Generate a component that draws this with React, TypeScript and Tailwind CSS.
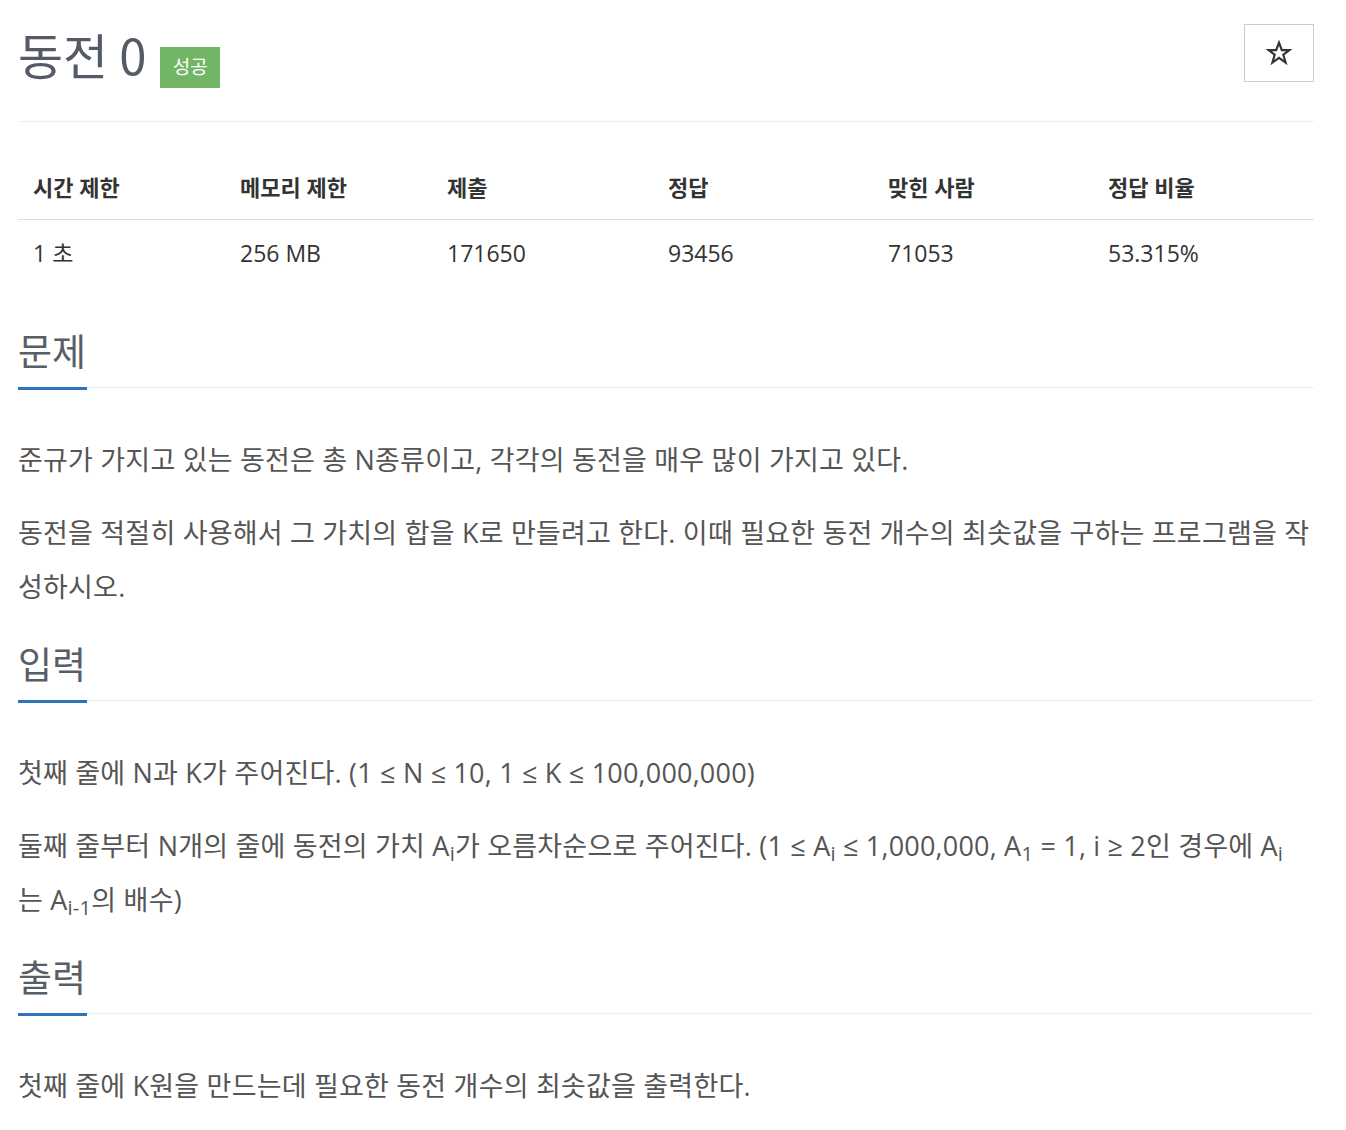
const font = { fontFamily: '"Open Sans", "Noto Sans CJK KR", sans-serif' }

const stats = [
  { label: '시간 제한', value: '1 초', w: 'w-[207px]' },
  { label: '메모리 제한', value: '256 MB', w: 'w-[207px]' },
  { label: '제출', value: '171650', w: 'w-[221px]' },
  { label: '정답', value: '93456', w: 'w-[220px]' },
  { label: '맞힌 사람', value: '71053', w: 'w-[220px]' },
  { label: '정답 비율', value: '53.315%', w: 'flex-1' },
]

const Section: React.FC<{ title: string; children: React.ReactNode }> = ({ title, children }) => (
  <section>
    <h2 className="text-[37px] leading-[54px] text-[#585e68] font-['Noto_Sans_CJK_KR',sans-serif] pb-[10px]">{title}</h2>
    <div className="flex items-start">
      <div className="w-[69px] h-[3px] bg-[#2f73bb]" />
      <div className="flex-1 border-t border-dotted border-[#dcdcdc]" />
    </div>
    <div className="pt-[43px] flex flex-col gap-[19px] text-[27px] leading-[54px] tracking-[0.2px] text-[#555]">
      {children}
    </div>
  </section>
)

export default function App() {
  return (
    <div className="bg-white min-h-screen pl-[18px] pr-[32px] pt-[24px] pb-[20px] text-[#333]" style={font}>
      <div className="flex items-start justify-between pb-[33px] border-b border-[#eeeeee]">
        <div className="flex items-start">
          <h1 className="text-[49px] leading-[60px] text-[#555b65] font-['Noto_Sans_CJK_KR',sans-serif]">동전 0</h1>
          <span className="ml-[14px] mt-[23px] w-[60px] h-[41px] flex items-center justify-center bg-[#72b566] text-white text-[19px]">
            성공
          </span>
        </div>
        <button className="w-[70px] h-[58px] border border-[#cccccc] flex items-center justify-center">
          <svg width="26" height="26" viewBox="0 0 24 24" fill="none" stroke="#333" strokeWidth="2" strokeLinejoin="miter">
            <polygon points="12,2.5 14.6,9.3 21.7,9.3 16,13.6 18.1,20.8 12,16.5 5.9,20.8 8,13.6 2.3,9.3 9.4,9.3" />
          </svg>
        </button>
      </div>

      <div className="mt-[34px]">
        <div className="flex border-b border-[#dddddd] h-[64px] items-center">
          {stats.map((s) => (
            <div key={s.label} className={`${s.w} pl-[15px] text-[22px] font-bold text-[#333]`}>
              {s.label}
            </div>
          ))}
        </div>
        <div className="flex h-[66px] items-center">
          {stats.map((s) => (
            <div key={s.label} className={`${s.w} pl-[15px] text-[23px] text-[#333]`}>
              {s.value}
            </div>
          ))}
        </div>
      </div>

      <div className="mt-[37px] flex flex-col gap-[22px]">
        <Section title="문제">
          <p>준규가 가지고 있는 동전은 총 N종류이고, 각각의 동전을 매우 많이 가지고 있다.</p>
          <p>동전을 적절히 사용해서 그 가치의 합을 K로 만들려고 한다. 이때 필요한 동전 개수의 최솟값을 구하는 프로그램을 작성하시오.</p>
        </Section>
        <Section title="입력">
          <p>첫째 줄에 N과 K가 주어진다. (1 ≤ N ≤ 10, 1 ≤ K ≤ 100,000,000)</p>
          <p>
            둘째 줄부터 N개의 줄에 동전의 가치 A<sub>i</sub>가 오름차순으로 주어진다. (1 ≤ A<sub>i</sub> ≤ 1,000,000, A
            <sub>1</sub> = 1, i ≥ 2인 경우에 A<sub>i</sub>
            <br />는 A<sub>i-1</sub>의 배수)
          </p>
        </Section>
        <Section title="출력">
          <p>첫째 줄에 K원을 만드는데 필요한 동전 개수의 최솟값을 출력한다.</p>
        </Section>
      </div>
    </div>
  )
}
